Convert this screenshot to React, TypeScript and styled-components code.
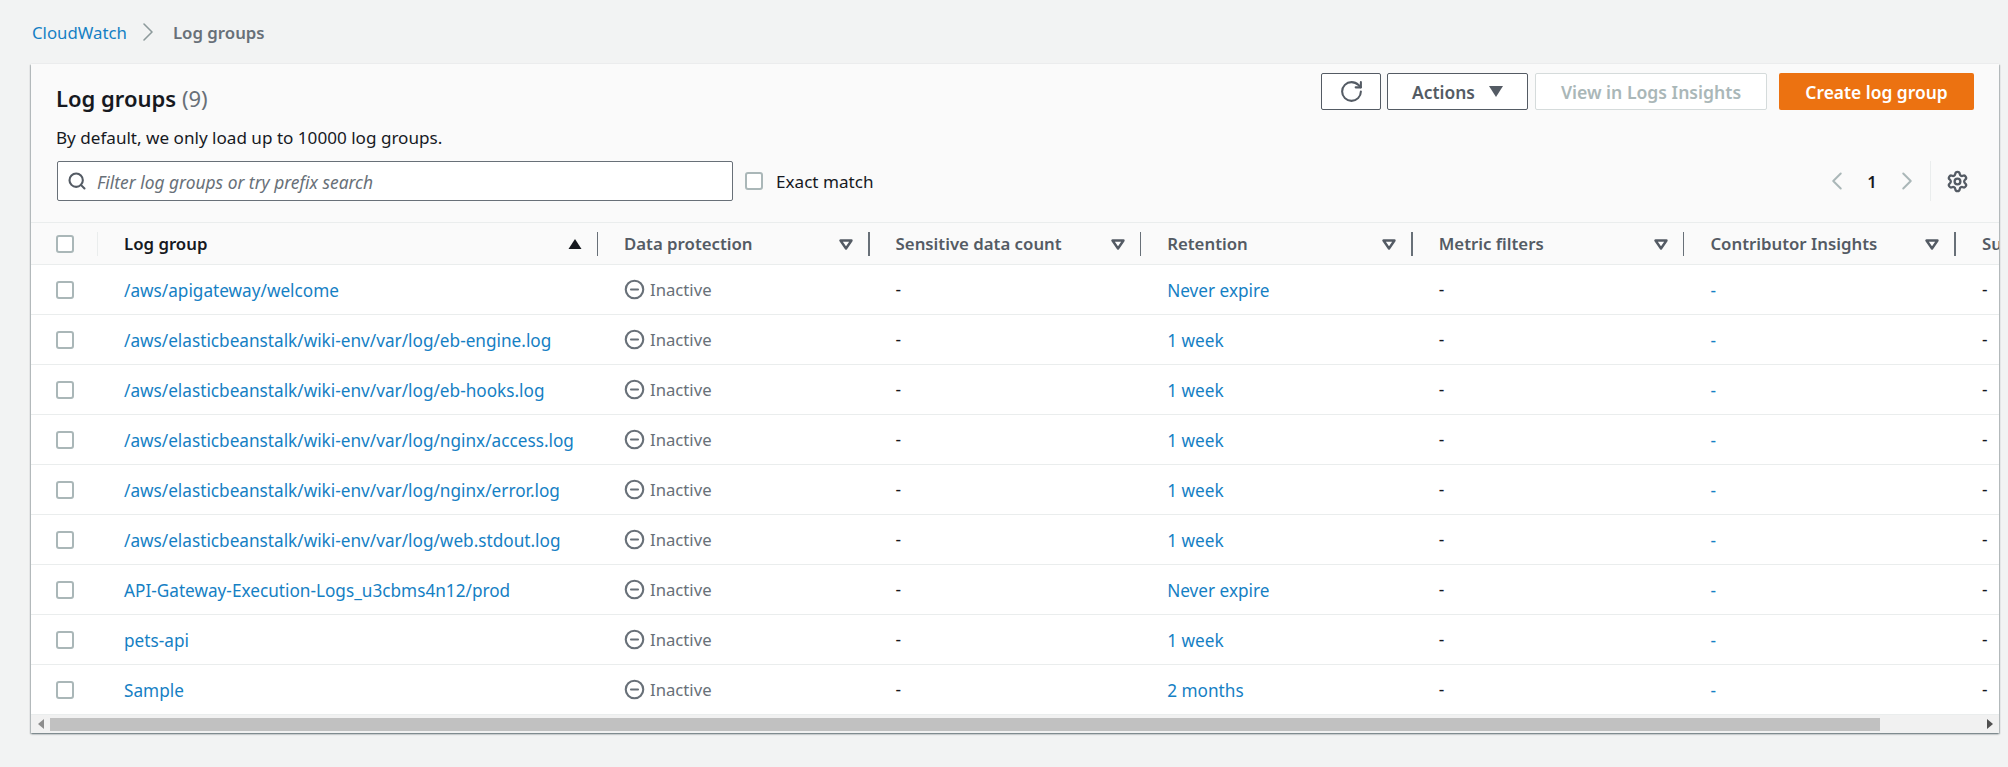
import React from 'react'
import styled, { createGlobalStyle } from 'styled-components'
import { ChevronLeft, ChevronRight, CircleMinus, RotateCw, Search, Settings } from 'lucide-react'

const GlobalStyle = createGlobalStyle`
    html, body {
        margin: 0;
        padding: 0;
        background: #f2f3f3;
        font-family: "Noto Sans", "Open Sans", sans-serif;
        color: #16191f;
    }
`

const logGroups = [
    { name: '/aws/apigateway/welcome', retention: 'Never expire' },
    { name: '/aws/elasticbeanstalk/wiki-env/var/log/eb-engine.log', retention: '1 week' },
    { name: '/aws/elasticbeanstalk/wiki-env/var/log/eb-hooks.log', retention: '1 week' },
    { name: '/aws/elasticbeanstalk/wiki-env/var/log/nginx/access.log', retention: '1 week' },
    { name: '/aws/elasticbeanstalk/wiki-env/var/log/nginx/error.log', retention: '1 week' },
    { name: '/aws/elasticbeanstalk/wiki-env/var/log/web.stdout.log', retention: '1 week' },
    { name: 'API-Gateway-Execution-Logs_u3cbms4n12/prod', retention: 'Never expire' },
    { name: 'pets-api', retention: '1 week' },
    { name: 'Sample', retention: '2 months' },
]

const filterColumns = ['Data protection', 'Sensitive data count', 'Retention', 'Metric filters', 'Contributor Insights']

const SortTriangle: React.FC<{ outlined?: boolean }> = ({ outlined }) => (
    <svg width="14" height="12" viewBox="0 0 14 12">
        {outlined
            ? <path d="M1.5 2.5h11L7 10.5z" fill="#fff" stroke="#545b64" strokeWidth="2.4" strokeLinejoin="round" />
            : <path d="M0.5 11L7 1l6.5 10z" fill="#16191f" />}
    </svg>
)

const App: React.FC = () => {
    return (
        <Page>
            <GlobalStyle />
            <Breadcrumbs>
                <Crumb>CloudWatch</Crumb>
                <ChevronRight size={32} strokeWidth={1.2} color="#8d9a9b" />
                <CurrentCrumb>Log groups</CurrentCrumb>
            </Breadcrumbs>
            <Panel>
                <TopRow>
                    <TitleBlock>
                        <Title>Log groups <Count>(9)</Count></Title>
                        <Subtitle>By default, we only load up to 10000 log groups.</Subtitle>
                    </TitleBlock>
                    <Actions>
                        <Button $width={60}><RotateCw size={25} strokeWidth={2} /></Button>
                        <Button $width={141}>
                            Actions
                            <ActionsCaret viewBox="0 0 14 11"><path d="M0 0h14L7 11z" fill="#545b64" /></ActionsCaret>
                        </Button>
                        <DisabledButton>View in Logs Insights</DisabledButton>
                        <PrimaryButton>Create log group</PrimaryButton>
                    </Actions>
                </TopRow>
                <FilterRow>
                    <SearchBox>
                        <Search size={20} strokeWidth={2.5} color="#545b64" />
                        <SearchHint>Filter log groups or try prefix search</SearchHint>
                    </SearchBox>
                    <CheckBox />
                    <ExactLabel>Exact match</ExactLabel>
                    <Pager>
                        <ChevronLeft size={30} strokeWidth={1.6} color="#aab7b8" />
                        <PageNumber>1</PageNumber>
                        <ChevronRight size={30} strokeWidth={1.6} color="#aab7b8" />
                        <PagerDivider />
                        <Settings size={23} strokeWidth={2.4} color="#545b64" />
                    </Pager>
                </FilterRow>
                <HeaderRow>
                    <CheckCell>
                        <CheckBox />
                        <FaintDivider />
                    </CheckCell>
                    <HeaderCell $active>
                        <HeaderLabel>Log group</HeaderLabel>
                        <SortTriangle />
                        <ColumnDivider />
                    </HeaderCell>
                    {filterColumns.map((label) => (
                        <HeaderCell key={label}>
                            <HeaderLabel>{label}</HeaderLabel>
                            <SortTriangle outlined />
                            <ColumnDivider />
                        </HeaderCell>
                    ))}
                    <HeaderCell>
                        <HeaderLabel>Subscription filters</HeaderLabel>
                    </HeaderCell>
                </HeaderRow>
                {logGroups.map((group) => (
                    <Row key={group.name}>
                        <CheckCell><CheckBox /></CheckCell>
                        <Cell><Link>{group.name}</Link></Cell>
                        <Cell>
                            <Status>
                                <CircleMinus size={21} strokeWidth={2.4} color="#687078" />
                                Inactive
                            </Status>
                        </Cell>
                        <Cell>-</Cell>
                        <Cell><Link>{group.retention}</Link></Cell>
                        <Cell>-</Cell>
                        <Cell><Link>-</Link></Cell>
                        <Cell>-</Cell>
                    </Row>
                ))}
                <ScrollBar>
                    <ScrollArrow viewBox="0 0 6 10"><path d="M6 0v10L0 5z" fill="#8c8c8c" /></ScrollArrow>
                    <ScrollTrack>
                        <ScrollThumb />
                    </ScrollTrack>
                    <ScrollArrow viewBox="0 0 6 10"><path d="M0 0v10l6-5z" fill="#505050" /></ScrollArrow>
                </ScrollBar>
            </Panel>
        </Page>
    )
}

export default App

const Page = styled.div`
    width: 2008px;
    height: 767px;
    overflow: hidden;
    background: #f2f3f3;
`

const Breadcrumbs = styled.nav`
    display: flex;
    align-items: center;
    height: 64px;
    padding-left: 32px;
    font-size: 16.8px;
    gap: 5px;
`

const Crumb = styled.a`
    color: #1580c4;
`

const CurrentCrumb = styled.span`
    margin-left: 4px;
    color: #687078;
    font-weight: 600;
`

const Panel = styled.section`
    width: 1968px;
    margin-left: 31px;
    height: 669px;
    background: #fafafa;
    overflow: hidden;
    box-shadow: 0 1px 2px 0 rgba(0, 28, 36, 0.4), 1px 1px 1px 0 rgba(0, 28, 36, 0.15), -1px 1px 1px 0 rgba(0, 28, 36, 0.15);
`

const TopRow = styled.div`
    display: flex;
    justify-content: space-between;
    height: 97px;
    padding: 9px 25px 0 25px;
    box-sizing: border-box;
`

const TitleBlock = styled.div`
    padding-top: 9px;
`

const Title = styled.h1`
    margin: 0;
    font-size: 22px;
    line-height: 32px;
    font-weight: 600;
`

const Count = styled.span`
    font-weight: 400;
    color: #687078;
`

const Subtitle = styled.p`
    margin: 13px 0 0;
    font-size: 17.1px;
    line-height: 22px;
`

const Actions = styled.div`
    display: flex;
    align-items: flex-start;
    gap: 6px;
`

const Button = styled.button<{ $width: number }>`
    display: flex;
    align-items: center;
    justify-content: center;
    gap: 14px;
    width: ${(p) => p.$width}px;
    height: 37px;
    padding: 0;
    border: 1.5px solid #545b64;
    border-radius: 2px;
    background: #fff;
    color: #545b64;
    font-family: inherit;
    font-size: 17.4px;
    font-weight: 600;
`

const ActionsCaret = styled.svg`
    width: 14px;
    height: 11px;
`

const DisabledButton = styled.button`
    width: 232px;
    height: 37px;
    padding: 0;
    margin-left: 1px;
    border: 1.5px solid #d5dbdb;
    border-radius: 2px;
    background: #fff;
    color: #aab7b8;
    font-family: inherit;
    font-size: 17.6px;
    font-weight: 600;
`

const PrimaryButton = styled.button`
    width: 195px;
    height: 37px;
    padding: 0;
    margin-left: 6px;
    border: none;
    border-radius: 2px;
    background: #ec7211;
    color: #fff;
    font-family: inherit;
    font-size: 17.4px;
    font-weight: 600;
`

const FilterRow = styled.div`
    display: flex;
    align-items: center;
    height: 40px;
    padding: 0 25px 0 26px;
    margin-bottom: 21px;
`

const SearchBox = styled.div`
    display: flex;
    align-items: center;
    gap: 10px;
    width: 676px;
    height: 40px;
    box-sizing: border-box;
    padding-left: 9px;
    margin-right: 12px;
    background: #fff;
    border: 1.5px solid #687078;
    border-radius: 2px;
`

const SearchHint = styled.span`
    padding-top: 2px;
    font-size: 17.4px;
    font-style: italic;
    color: #687078;
`

const CheckBox = styled.span`
    display: block;
    width: 18px;
    height: 18px;
    box-sizing: border-box;
    background: #fff;
    border: 2px solid #aab7b8;
    border-radius: 3px;
    flex-shrink: 0;
`

const ExactLabel = styled.span`
    margin-left: 13px;
    font-size: 17.1px;
`

const Pager = styled.div`
    display: flex;
    align-items: center;
    margin-left: auto;
    margin-right: 5px;
    height: 40px;
`

const PageNumber = styled.span`
    width: 40px;
    text-align: center;
    font-size: 16.5px;
    font-weight: 600;
`

const PagerDivider = styled.span`
    width: 1px;
    height: 40px;
    margin: 0 15px 0 8px;
    background: #eaeded;
`

const gridColumns = `67px 500px repeat(5, 271.6px) 200px`

const HeaderRow = styled.div`
    display: grid;
    grid-template-columns: ${gridColumns};
    height: 43px;
    background: #fafafa;
    border-top: 1px solid #eaeded;
    border-bottom: 1px solid #eaeded;
    box-sizing: border-box;
`

const CheckCell = styled.div`
    display: flex;
    align-items: center;
    padding-left: 25px;
    justify-content: space-between;
`

const HeaderCell = styled.div<{ $active?: boolean }>`
    display: flex;
    align-items: center;
    padding-left: 26px;
    font-size: 16.8px;
    font-weight: 600;
    white-space: nowrap;
    color: ${(p) => (p.$active ? '#16191f' : '#545b64')};
`

const HeaderLabel = styled.span`
    flex: 1;
`

const ColumnDivider = styled.span`
    width: 1.5px;
    height: 24px;
    margin-left: 15px;
    background: #687078;
`

const FaintDivider = styled.span`
    width: 1px;
    height: 24px;
    background: #eaeded;
`

const Row = styled.div`
    display: grid;
    grid-template-columns: ${gridColumns};
    height: 50px;
    background: #fff;
    border-bottom: 1.5px solid #eaeded;
    box-sizing: border-box;
`

const Cell = styled.div`
    display: flex;
    align-items: center;
    padding-left: 26px;
    font-size: 17.2px;
    white-space: nowrap;
`

const Link = styled.a`
    display: inline-block;
    padding-top: 2px;
    color: #1580c4;
`

const Status = styled.span`
    display: flex;
    align-items: center;
    gap: 5px;
    font-size: 16.7px;
    color: #687078;
`

const ScrollBar = styled.div`
    display: flex;
    align-items: center;
    height: 18px;
    background: #f1f1f1;
`

const ScrollArrow = styled.svg`
    width: 6px;
    height: 10px;
    margin: 0 6.5px;
    flex-shrink: 0;
`

const ScrollTrack = styled.div`
    flex: 1;
    height: 13px;
`

const ScrollThumb = styled.div`
    width: 1830px;
    height: 100%;
    background: #c1c1c1;
`
